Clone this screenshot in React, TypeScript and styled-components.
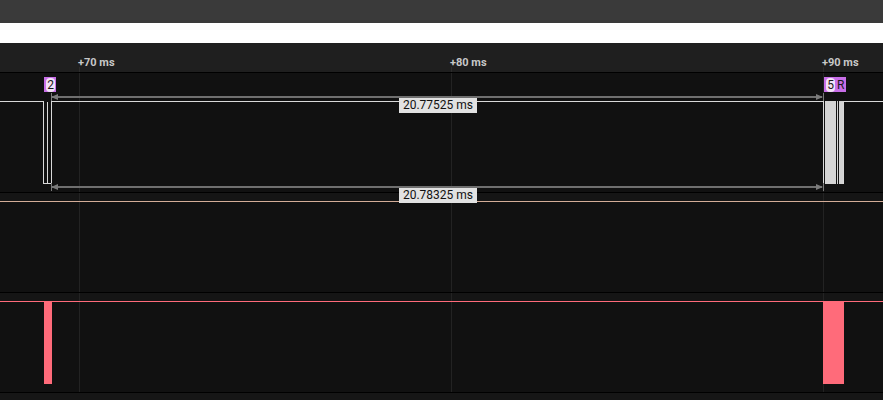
import React from 'react';
import styled, {createGlobalStyle} from "styled-components";

const PX_PER_MS = 37.2;
const ORIGIN_X = 79; // x of +70 ms
const timeToX = (ms: number) => ORIGIN_X + (ms - 70) * PX_PER_MS;

const ticks = [70, 80, 90];

const measures = [
    {y: 20, label: "20.77525 ms"},
    {y: 110, label: "20.78325 ms"},
];

export default function App() {
    return (
        <>
            <GlobalStyle/>
            <Page>
                <TitleBar/>
                <FilterStrip/>
                <Ruler>
                    {ticks.map(t => (
                        <TickLabel key={t} style={{left: timeToX(t) - 1}}>+{t} ms</TickLabel>
                    ))}
                    <svg width="883" height="29">
                        {ticks.map(t => (
                            <line key={t} x1={timeToX(t) + 0.5} x2={timeToX(t) + 0.5} y1="24" y2="29" stroke="#2c2c2c"/>
                        ))}
                    </svg>
                </Ruler>
                <Lanes>
                    <Lane $height={119}>
                        <svg width="883" height="119" shapeRendering="crispEdges">
                            <Grid height={119}/>
                            <path d="M0 28.5 H43.5 V110.5 H47.5 V28.5 V110.5 H51.5 V28.5 H823.5 V110.5" fill="none" stroke="#d9d9d9" strokeWidth="1"/>
                            <rect x="825" y="28" width="11" height="83" fill="#d4d4d4"/>
                            <rect x="837" y="28" width="1" height="83" fill="#d4d4d4"/>
                            <rect x="839" y="28" width="4" height="83" fill="#d4d4d4"/>
                            <path d="M843.5 110.5 V28.5 H883" fill="none" stroke="#d9d9d9"/>
                        </svg>
                    </Lane>
                    <Lane $height={99}>
                        <svg width="883" height="99" shapeRendering="crispEdges">
                            <rect x="0" y="0" width="883" height="8" fill="#151515"/>
                            <Grid height={99}/>
                            <line x1="0" x2="883" y1="8.5" y2="8.5" stroke="#d4ad98"/>
                        </svg>
                    </Lane>
                    <Lane $height={99}>
                        <svg width="883" height="99" shapeRendering="crispEdges">
                            <rect x="0" y="0" width="883" height="8" fill="#151515"/>
                            <Grid height={99}/>
                            <line x1="0" x2="883" y1="8.5" y2="8.5" stroke="#ff6b7a"/>
                            <rect x="44" y="9" width="8" height="82" fill="#ff6b7a"/>
                            <rect x="823" y="9" width="21" height="82" fill="#ff6b7a"/>
                        </svg>
                    </Lane>

                    <Marker style={{left: 44, top: 4}}>
                        <Pill>2</Pill>
                    </Marker>
                    <Marker style={{left: 824, top: 4}}>
                        <Pill>5</Pill>
                        <MarkerText>R</MarkerText>
                    </Marker>

                    {measures.map(m => (
                        <Measure key={m.label} style={{top: m.y}}>
                            <svg width="883" height="8">
                                <line x1="52" x2="822" y1="4" y2="4" stroke="#6f6f6f" strokeWidth="2"/>
                                <path d="M51 4 L58 1 L58 7 Z" fill="#7a7a7a"/>
                                <path d="M823 4 L816 1 L816 7 Z" fill="#7a7a7a"/>
                                <line x1="51.5" x2="51.5" y1="0" y2="8" stroke="#7a7a7a"/>
                                <line x1="823.5" x2="823.5" y1="0" y2="8" stroke="#7a7a7a"/>
                            </svg>
                            <MeasureLabel>{m.label}</MeasureLabel>
                        </Measure>
                    ))}
                </Lanes>
            </Page>
        </>
    );
}

const Grid = ({height}: { height: number }) => (
    <>
        {ticks.map(t => (
            <line key={t} x1={timeToX(t) + 0.5} x2={timeToX(t) + 0.5} y1="0" y2={height} stroke="#232323"/>
        ))}
    </>
);

const GlobalStyle = createGlobalStyle`
  body {
    margin: 0;
    background: #161616;
    font-family: Roboto, "Liberation Sans", sans-serif;
    overflow: hidden;
  }
`

const Page = styled.div`
  width: 883px;
  display: flex;
  flex-direction: column;
`

const TitleBar = styled.div`
  height: 23px;
  background: #3a3a3a;
`

const FilterStrip = styled.div`
  height: 20px;
  background: #ffffff;
`

const Ruler = styled.div`
  position: relative;
  height: 29px;
  background: #1f1f1f;
  border-bottom: 1px solid #000;

  svg {
    display: block;
  }
`

const TickLabel = styled.span`
  position: absolute;
  top: 13px;
  font-size: 11px;
  font-weight: 700;
  color: #c8c8c8;
  white-space: nowrap;
  line-height: 13px;
`

const Lanes = styled.div`
  position: relative;
  display: flex;
  flex-direction: column;
`

const Lane = styled.div<{ $height: number }>`
  height: ${p => p.$height}px;
  background: #111111;
  border-bottom: 1px solid #000;

  svg {
    display: block;
  }
`

const Marker = styled.div`
  position: absolute;
  display: flex;
  align-items: center;
  gap: 1px;
  height: 15px;
  padding: 0 1px 0 2px;
  background: #c86ee8;
  font-size: 12px;
  line-height: 14px;
  color: #1a1a1a;
`

const Pill = styled.span`
  display: flex;
  align-items: center;
  justify-content: center;
  min-width: 7px;
  height: 14px;
  padding: 0 1px;
  border-radius: 4px;
  background: #f3e2f7;
`

const MarkerText = styled.span`
  padding: 0 1px;
`

const Measure = styled.div`
  position: absolute;
  left: 0;
  width: 883px;
  height: 8px;

  svg {
    display: block;
  }
`

const MeasureLabel = styled.span`
  position: absolute;
  left: 399px;
  top: 5px;
  width: 78px;
  height: 15px;
  background: #e2e2e2;
  color: #111;
  font-size: 12px;
  line-height: 15px;
  text-align: center;
`
